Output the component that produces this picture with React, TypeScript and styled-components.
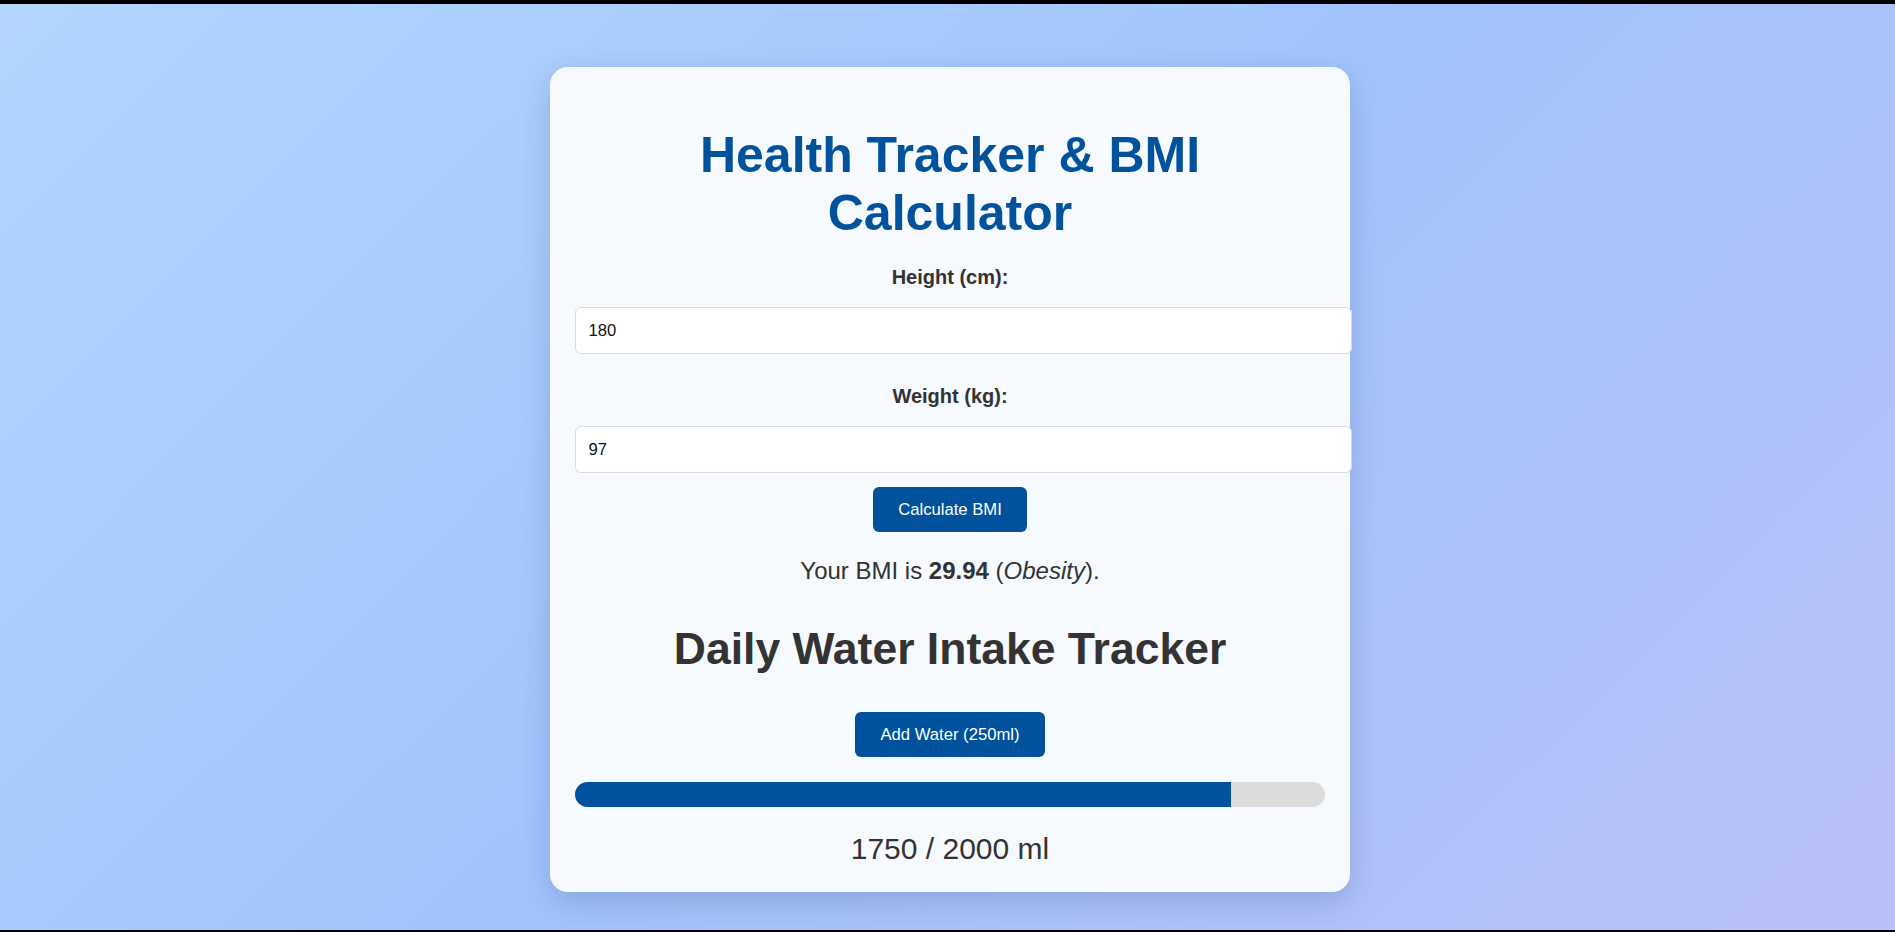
import React from "react";
import styled, { createGlobalStyle } from "styled-components";

const GlobalStyle = createGlobalStyle`
  html, body {
    margin: 0;
    padding: 0;
    background: #000;
    overflow: hidden;
  }
  body {
    font-family: "Liberation Sans", Arial, sans-serif;
  }
`;

const Frame = styled.div`
  height: 932px;
  box-sizing: border-box;
  padding: 4px 0 2px;
  background: #000;
`;

const Viewport = styled.div`
  height: 926px;
  box-sizing: border-box;
  padding: 63px 0 0 5px;
  overflow: hidden;
  background: linear-gradient(135deg, #b2d6fe 0%, #a2c4fb 50%, #bac0f8 100%);
`;

const Card = styled.div`
  width: 750px;
  margin: 0 auto;
  padding: 25px 25px 26px;
  background: #f6f9fe;
  border-radius: 18px;
  box-shadow: 0 10px 30px rgba(30, 50, 110, 0.2);
  text-align: center;
  color: #333;
`;

const Title = styled.h1`
  margin: 33.5px 0 24px;
  font-size: 50px;
  font-weight: bold;
  line-height: normal;
  color: #00529c;
`;

const Label = styled.label`
  display: block;
  margin: 0 0 18.5px;
  font-size: 20px;
  font-weight: bold;
  line-height: 23px;
  color: #333;
`;

const Input = styled.input<{ $gap: number }>`
  display: block;
  box-sizing: content-box;
  width: 100%;
  margin: 0 0 ${(p) => p.$gap}px;
  padding: 12.5px;
  border: 1px solid #d9dbe0;
  border-radius: 6px;
  background: #fff;
  font-family: "Liberation Sans", Arial, sans-serif;
  font-size: 16.67px;
  color: #111;
  outline: none;
`;

const Button = styled.button`
  display: inline-block;
  padding: 12.5px 25px;
  border: none;
  border-radius: 6px;
  background: #00529c;
  color: #fff;
  font-family: "Liberation Sans", Arial, sans-serif;
  font-size: 16.67px;
  line-height: normal;
  cursor: pointer;
`;

const Result = styled.p`
  margin: 25px 0 0;
  font-size: 24px;
  line-height: normal;
  color: #333;
`;

const SubTitle = styled.h2`
  margin: 38.5px 0 38.5px;
  font-size: 44.5px;
  font-weight: bold;
  line-height: normal;
  color: #333;
`;

const Track = styled.div`
  height: 25px;
  margin-top: 25px;
  border-radius: 12.5px;
  background: #dcdcdc;
  overflow: hidden;
`;

const Fill = styled.div`
  height: 100%;
  background: #00529c;
`;

const Amount = styled.p`
  margin: 25px 0 0;
  font-size: 30px;
  line-height: normal;
  color: #333;
`;

export default function App() {
  const intake = 1750;
  const goal = 2000;
  return (
    <Frame>
      <GlobalStyle />
      <Viewport>
        <Card>
          <Title>
            Health Tracker &amp; BMI
            <br />
            Calculator
          </Title>
          <Label htmlFor="height">Height (cm):</Label>
          <Input id="height" type="number" defaultValue="180" $gap={30.5} />
          <Label htmlFor="weight">Weight (kg):</Label>
          <Input id="weight" type="number" defaultValue="97" $gap={14} />
          <Button>Calculate BMI</Button>
          <Result>
            Your BMI is <strong>29.94</strong> (<em>Obesity</em>).
          </Result>
          <SubTitle>Daily Water Intake Tracker</SubTitle>
          <Button>Add Water (250ml)</Button>
          <Track>
            <Fill style={{ width: `${(intake / goal) * 100}%` }} />
          </Track>
          <Amount>
            {intake} / {goal} ml
          </Amount>
        </Card>
      </Viewport>
    </Frame>
  );
}
